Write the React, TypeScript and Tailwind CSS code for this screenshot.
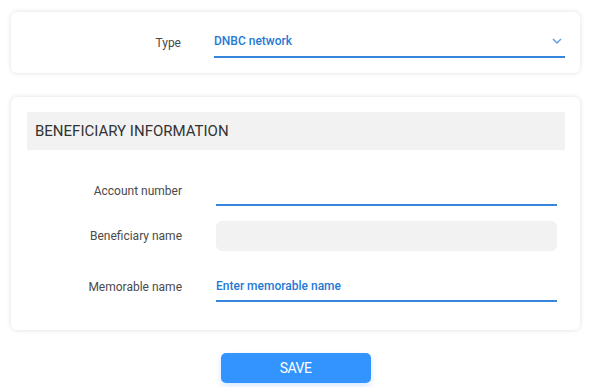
import { ReactNode } from 'react'

function Row({ label, children, className = '' }: { label: string; children: ReactNode; className?: string }) {
  return (
    <div className={`flex items-center ${className}`}>
      <div className="w-[171px] shrink-0 text-right text-[12px] text-[#4a4a4a]">{label}</div>
      <div className="ml-[34px] flex-1">{children}</div>
    </div>
  )
}

export default function App() {
  return (
    <div className="min-h-[387px] bg-white px-[11px] pt-[12px] font-['Roboto',sans-serif]">
      <div className="h-[61px] rounded-[6px] bg-white pt-[15px] pr-[15px] shadow-[0_0_5px_rgba(0,0,0,0.13)]">
        <div className="flex items-center">
          <div className="w-[170px] shrink-0 text-right text-[12px] text-[#4a4a4a]">Type</div>
          <div className="ml-[33px] flex h-[31px] flex-1 items-center justify-between border-b-2 border-b-[#3585db] pb-[1px]">
            <span className="text-[12px] font-medium text-[#1f7ad6]">DNBC network</span>
            <svg width="10" height="6" viewBox="0 0 10 6" className="mr-[3px]">
              <polyline points="1,1 5,5 9,1" fill="none" stroke="#5a9ee6" strokeWidth="1.4" />
            </svg>
          </div>
        </div>
      </div>

      <div className="mt-[24px] h-[233px] rounded-[6px] bg-white pt-[15px] pl-[16px] pr-[15px] shadow-[0_0_5px_rgba(0,0,0,0.13)]">
        <div className="flex h-[38px] items-center bg-[#f2f2f2] px-[8px] text-[15px] text-[#333]">
          BENEFICIARY INFORMATION
        </div>
        <div className="-ml-[16px] pr-[8px]">
          <Row label="Account number" className="mt-[26px]">
            <div className="h-[30px] border-b-2 border-b-[#3585db]" />
          </Row>
          <Row label="Beneficiary name" className="mt-[15px]">
            <div className="h-[30px] rounded-[6px] bg-[#f2f2f2]" />
          </Row>
          <Row label="Memorable name" className="mt-[21px]">
            <div className="flex h-[30px] items-center border-b-2 border-b-[#3585db] pb-[1px] text-[12px] font-medium text-[#1f7ad6]">
              Enter memorable name
            </div>
          </Row>
        </div>
      </div>

      <div className="mt-[23px] flex justify-center">
        <button className="h-[30px] w-[150px] rounded-[5px] bg-[#3393ff] text-[14px] tracking-[-0.5px] text-white shadow-[0_3px_6px_rgba(51,147,255,0.2)]">
          SAVE
        </button>
      </div>
    </div>
  )
}
